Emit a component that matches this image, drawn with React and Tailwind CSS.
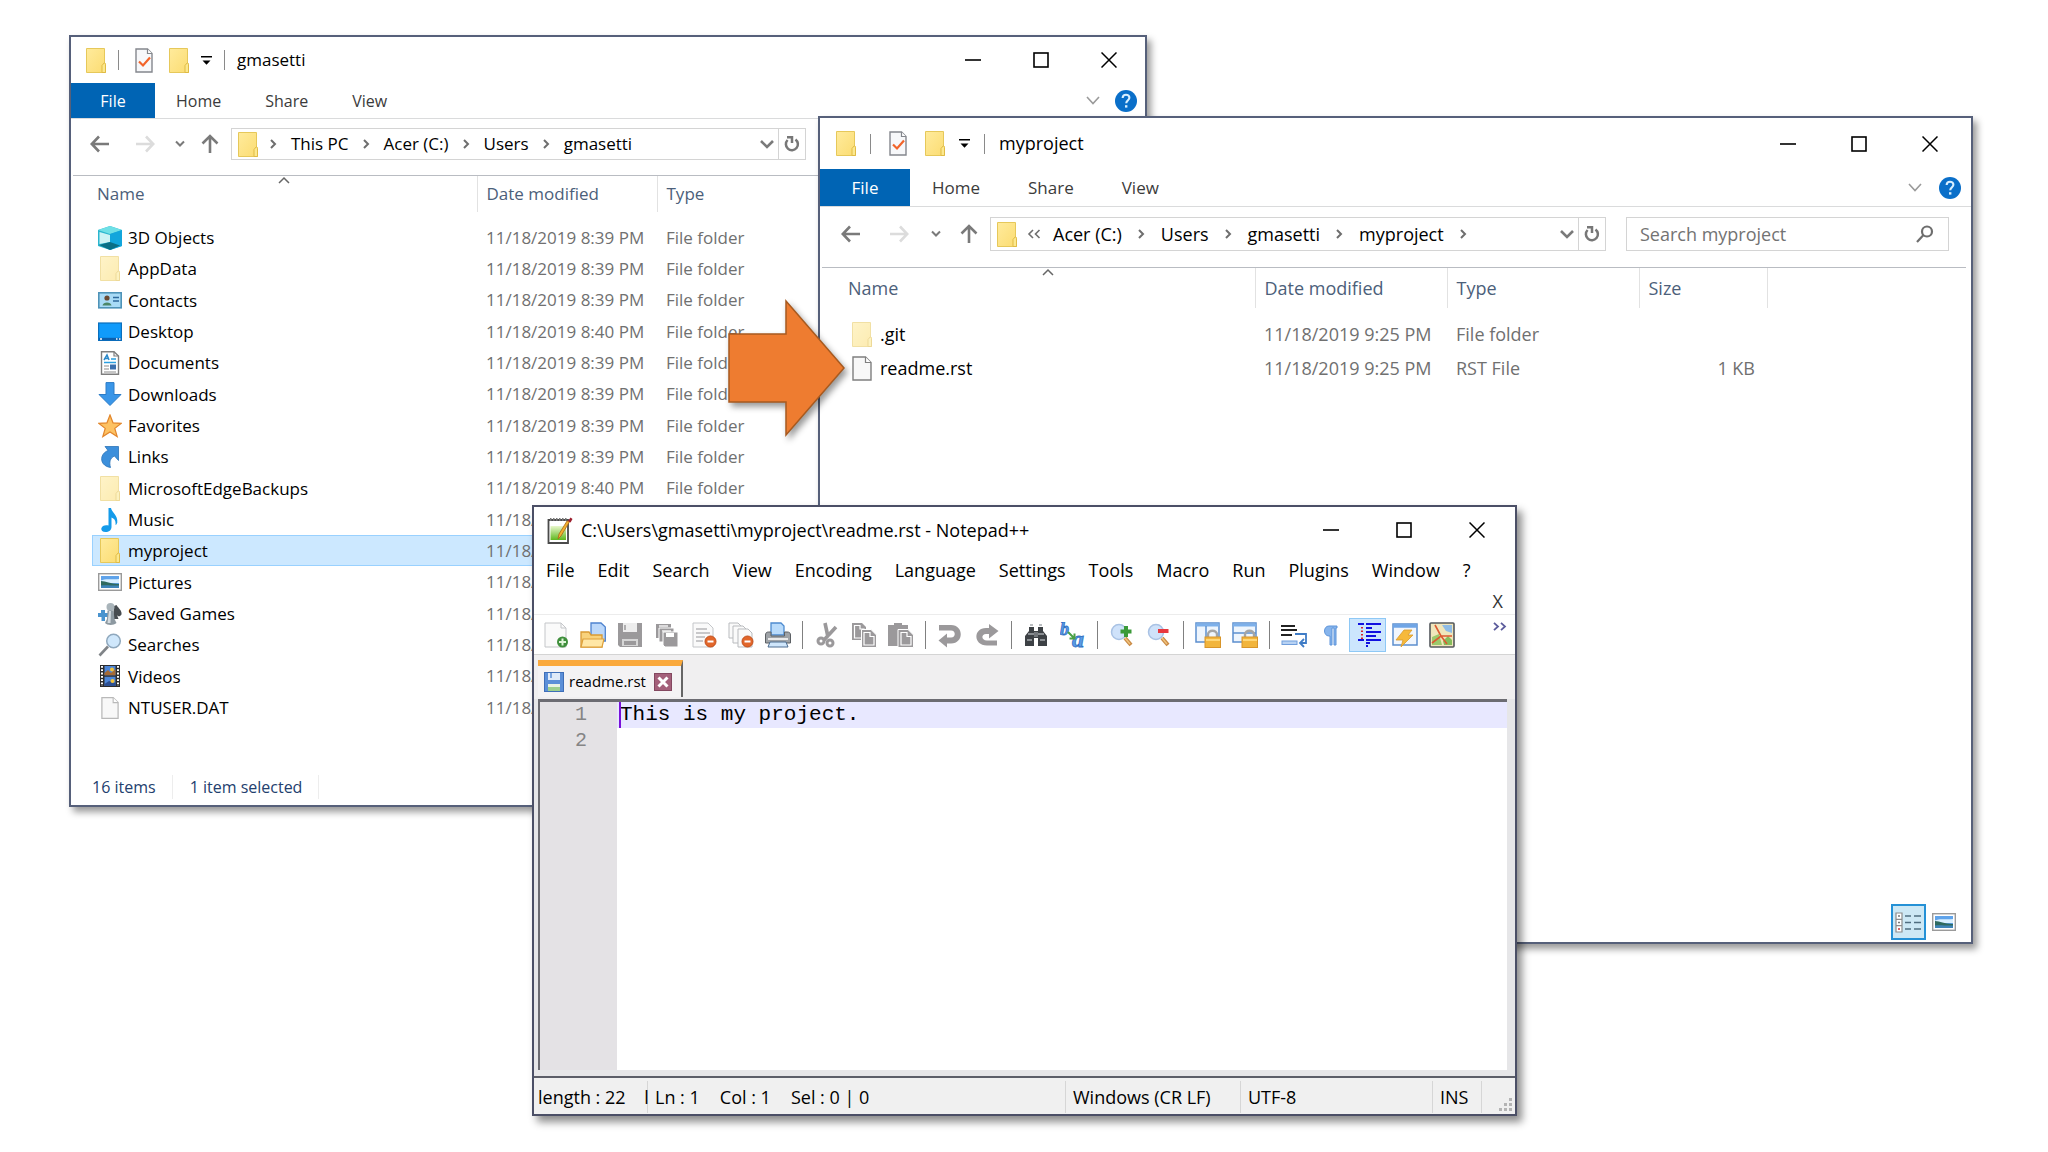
import React from "react";

/* ---------- small drawings ---------- */

function Folder({ className, pale, uid = "f" }) {
  return (
    <svg viewBox="0 0 20 25" className={className} aria-hidden="true" opacity={pale ? 0.55 : 1}>
      <defs>
        <linearGradient id={uid} x1="0" y1="0" x2="1" y2="1">
          <stop offset="0" stopColor="#ffeb9c" />
          <stop offset="1" stopColor="#fbdc72" />
        </linearGradient>
      </defs>
      <path d="M.5 .5H18.5V14.5L19.5 16.5V24.5H.5Z" fill={"url(#" + uid + ")"} stroke="#e6c85a" />
      <path d="M16 24.5V17.5L18.5 14.5L19.5 16.5V24.5Z" fill="#fce88e" stroke="#e0bb45" />
    </svg>
  );
}

function CheckDoc({ className }) {
  return (
    <svg viewBox="0 0 18 25" className={className} aria-hidden="true">
      <path d="M1 1H12.5L17 5.5V24H1Z" fill="#f7f8fa" stroke="#84878d" strokeWidth="1.4" />
      <path d="M12.5 1V5.5H17" fill="#fff" stroke="#84878d" strokeWidth="1.2" />
      <path d="M4 13.5L8 17.5L15 9.5" fill="none" stroke="#f2642a" strokeWidth="2.2" />
    </svg>
  );
}

function Page({ className, faint }) {
  const c = faint ? "#b9b9b9" : "#7f7f7f";
  return (
    <svg viewBox="0 0 20 25" className={className} aria-hidden="true">
      <path d="M1 1H13.5L19 6.5V24H1Z" fill="#f8f8f8" stroke={c} strokeWidth="1.4" />
      <path d="M13.5 1V6.5H19" fill="#fff" stroke={c} strokeWidth="1.2" />
    </svg>
  );
}

function Stroke({ box, d, className, width = 2 }) {
  return (
    <svg viewBox={box} className={className} fill="none" stroke="currentColor" strokeWidth={width} aria-hidden="true">
      <path d={d} />
    </svg>
  );
}

const Back = () => <Stroke box="0 0 20 18" d="M19 9H2M9 1.5L1.8 9L9 16.5" width={2.6} className="h-[18px] w-5 text-[#7a7a7a]" />;
const Forward = () => <Stroke box="0 0 20 18" d="M1 9H18M11 1.5L18.2 9L11 16.5" width={2.6} className="h-[18px] w-5 text-[#dcdcdc]" />;
const Up = () => <Stroke box="0 0 18 20" d="M9 19V2M1.5 9.5L9 2L16.5 9.5" width={2.6} className="h-5 w-[18px] text-[#7a7a7a]" />;
const SmallDown = () => <Stroke box="0 0 10 8" d="M1 1.5L5 5.5L9 1.5" className="h-2 w-[10px] text-[#7a7a7a]" />;
const Crumb = () => <Stroke box="0 0 7 10" d="M1 1L5 5L1 9" className="h-[10px] w-[7px] text-[#6e6e6e]" />;
const BoxDown = () => <Stroke box="0 0 14 10" d="M1 2L7 8L13 2" width={2.6} className="h-[10px] w-[14px] text-[#7a7a7a]" />;
const RibbonDown = () => <Stroke box="0 0 14 9" d="M1 1L7 7.5L13 1" width={1.6} className="h-[9px] w-[14px] text-[#9a9a9a]" />;

function Refresh() {
  return (
    <svg viewBox="0 0 16 18" className="h-[18px] w-4 text-[#777]" fill="none" stroke="currentColor" strokeWidth="2.5" aria-hidden="true">
      <path d="M3.6 5A6 6 0 1 0 11.5 4.4" />
      <path d="M3 2.2H8V8" />
    </svg>
  );
}

function Help() {
  return (
    <svg viewBox="0 0 22 22" className="size-[22px]" aria-hidden="true">
      <circle cx="11" cy="11" r="11" fill="#0a6fc9" />
      <path d="M7.6 8C7.8 5.8 9.2 4.8 11 4.8C13 4.8 14.4 6 14.4 7.8C14.4 10 11.4 10.4 11.2 13.2" fill="none" stroke="#d8efff" strokeWidth="2.1" />
      <rect x="10" y="15.2" width="2.4" height="2.4" fill="#d8efff" />
    </svg>
  );
}

function WindowButtons({ gap }) {
  return (
    <div className={"flex items-center text-black " + gap}>
      <button type="button" aria-label="Minimize" className="flex h-8 w-4 items-center justify-center">
        <svg viewBox="0 0 16 16" className="size-4"><path d="M0 8H16" stroke="currentColor" strokeWidth="1.6" /></svg>
      </button>
      <button type="button" aria-label="Maximize" className="flex h-8 w-4 items-center justify-center">
        <svg viewBox="0 0 16 16" className="size-4"><rect x="1" y="1" width="14" height="14" fill="none" stroke="currentColor" strokeWidth="1.6" /></svg>
      </button>
      <button type="button" aria-label="Close" className="flex h-8 w-4 items-center justify-center">
        <svg viewBox="0 0 16 16" className="size-4"><path d="M.5 .5L15.5 15.5M15.5 .5L.5 15.5" stroke="currentColor" strokeWidth="1.5" /></svg>
      </button>
    </div>
  );
}

/* ---------- file icons ---------- */

function Picture({ className }) {
  return (
    <svg viewBox="0 0 24 18" className={className} aria-hidden="true">
      <rect x=".7" y=".7" width="22.6" height="16.6" fill="#fff" stroke="#9a9a9a" strokeWidth="1.4" />
      <rect x="3" y="3" width="18" height="12" fill="#5fa3ea" />
      <path d="M3 7.500C8 5 14 7 21 6V10H3Z" fill="#d8efff" />
      <path d="M3 8C8 8 12 11 21 11V13H3Z" fill="#2f6a5f" />
      <path d="M3 12.5C9 11.5 14 13 21 12.5V15H3Z" fill="#3f84b8" />
    </svg>
  );
}

function FileIcon({ kind }) {
  const c = "size-6";
  switch (kind) {
    case "folder":
      return <Folder className="h-[25px] w-5" uid="row-f" />;
    case "pale":
      return <Folder className="h-[25px] w-5" pale uid="row-p" />;
    case "file":
      return <Page className="h-[25px] w-5" />;
    case "faintfile":
      return <Page className="h-6 w-[18px]" faint />;
    case "cube":
      return (
        <svg viewBox="0 0 24 24" className={c} aria-hidden="true">
          <path d="M0 4L12 0L24 4V20L12 24L0 20Z" fill="#2bb6cf" />
          <path d="M0 4L12 0L24 4L12 8Z" fill="#6fe0e6" />
          <path d="M12 8L24 4V20L12 24Z" fill="#12a6dc" />
          <path d="M1.5 6L12 9V16L1.5 18Z" fill="#cdf3f5" />
          <path d="M1 19L12 16L22 19.5L12 24Z" fill="#0a6f86" />
        </svg>
      );
    case "contacts":
      return (
        <svg viewBox="0 0 24 24" className={c} aria-hidden="true">
          <rect x=".8" y="4.8" width="22.4" height="15" fill="#a9dbf6" stroke="#4f93b8" strokeWidth="1.6" />
          <circle cx="9" cy="10" r="2.6" fill="#6b4a33" />
          <path d="M4.5 17.5C5 13.5 13 13.5 13.5 17.5Z" fill="#4d8768" />
          <path d="M15 9.5H21M15 13H21" stroke="#2f6a9c" strokeWidth="1.5" />
        </svg>
      );
    case "desktop":
      return (
        <svg viewBox="0 0 24 24" className={c} aria-hidden="true">
          <rect x=".6" y="3" width="22.8" height="17.4" fill="#109bfb" stroke="#0b6fbd" strokeWidth="1.2" />
          <rect x="1" y="17.8" width="22" height="2.4" fill="#0c5fae" />
          <path d="M2 19H4M18 19H19.5M21 19H22.5" stroke="#fff" strokeWidth="1.3" />
        </svg>
      );
    case "documents":
      return (
        <svg viewBox="0 0 24 24" className={c} aria-hidden="true">
          <path d="M3.5 .8H16L20.5 5V23.2H3.5Z" fill="#fff" stroke="#7e7e7e" strokeWidth="1.4" />
          <path d="M16 .8V5H20.5" fill="none" stroke="#7e7e7e" strokeWidth="1.2" />
          <path d="M6 9L9 4L11 9M7 7.5H11" stroke="#2a88c9" strokeWidth="1.5" fill="none" />
          <path d="M13 8H18M6 11.5H18" stroke="#2a9fe0" strokeWidth="1.6" />
          <path d="M6 15H11M6 18H11M6 21H18" stroke="#8c8c8c" strokeWidth="1.2" />
          <rect x="12" y="13.5" width="6" height="5" fill="#3a6fae" />
        </svg>
      );
    case "downloads":
      return (
        <svg viewBox="0 0 24 24" className={c} aria-hidden="true">
          <path d="M8 .6H16V12.5H23L12 23.5L1 12.5H8Z" fill="#3a96e8" stroke="#2c7cc7" />
        </svg>
      );
    case "star":
      return (
        <svg viewBox="0 0 24 24" className={c} aria-hidden="true">
          <path d="M12 1L15 8.8L23.3 9.3L16.8 14.4L19.2 22.6L12 17.9L4.8 22.6L7.2 14.4L.7 9.3L9 8.8Z" fill="#fdc263" stroke="#e2862c" strokeWidth="1.2" />
        </svg>
      );
    case "links":
      return (
        <svg viewBox="0 0 24 24" className={c} aria-hidden="true">
          <path d="M7 1.5H20.5V15.5L16.5 11C12 13 11 17 12.5 22.5C6 21.5 2.5 17 4 11.5C5 8.5 7.5 6.5 10 5.5Z" fill="#3c8fdb" stroke="#2b74b8" strokeWidth=".8" />
        </svg>
      );
    case "music":
      return (
        <svg viewBox="0 0 24 24" className={c} aria-hidden="true">
          <path d="M10.5 0H13C14 5 20 7 19.3 14.5C18.6 16.5 18 17 17.6 17C18 12 16 10.5 13.5 9.5V19C13.5 22 11 24 7.5 24C4.500 24 3 22.400 3.300 20.500C3.800 17.500 7.500 16.500 10.500 17.500Z" fill="#149bea" />
        </svg>
      );
    case "pictures":
      return <Picture className="h-[18px] w-6" />;
    case "games":
      return (
        <svg viewBox="0 0 24 24" className={c} aria-hidden="true">
          <path d="M18.500 3C21 7 24 8.500 23.500 12.500C22 15 20 14.500 19 13L20.500 17H15L16 4Z" fill="#474c50" />
          <path d="M0 11H3V8H7V11H11V15H7V19H3.500V15H0Z" fill="#4a94cf" />
          <circle cx="12.500" cy="5" r="4" fill="#a9b4ba" />
          <path d="M9.500 8.500H15.500L16.500 17L18.500 21C16 23.500 9 23.500 7 21L9 17Z" fill="#8d99a1" />
          <path d="M11 9H13L12.500 21H9.500Z" fill="#d3dbe0" />
        </svg>
      );
    case "searches":
      return (
        <svg viewBox="0 0 24 24" className={c} aria-hidden="true">
          <path d="M10 13.500L1.500 22.500" stroke="#808488" strokeWidth="2.600" />
          <circle cx="15.500" cy="8" r="6.800" fill="#cfe7fb" stroke="#8fa8bd" strokeWidth="1.500" />
        </svg>
      );
    case "videos":
      return (
        <svg viewBox="0 0 24 24" className={c} aria-hidden="true">
          <rect x="2" y="1" width="20" height="22" fill="#2c2c2c" />
          <rect x="6.500" y="2" width="11" height="9.300" fill="#4d86d8" />
          <rect x="6.500" y="12.700" width="11" height="9.300" fill="#4d86d8" />
          <path d="M6.500 9L10 6L13 9L17.500 5V11.300H6.500Z" fill="#a56a35" />
          <path d="M6.500 20L11 17L17.500 19V22H6.500Z" fill="#2c4f92" />
          <circle cx="14" cy="5.500" r="2" fill="#f3c33a" />
          <circle cx="14.500" cy="17" r="2" fill="#f3c33a" />
          <path d="M4 2V22M20 2V22" stroke="#fff" strokeWidth="2" strokeDasharray="1.800 1.500" />
        </svg>
      );
    default:
      return null;
  }
}

/* ---------- explorer windows ---------- */

const SIZES = {
  sm: {
    title: "h-[46px] text-[17px]",
    quick: "gap-3 pl-[15px]",
    props: "mx-1",
    tabs: "h-9 text-[16px]",
    file: "w-[84px]",
    tabGap: "gap-11 pl-[21px]",
    help: "gap-[15px] pr-2",
    winGap: "gap-[52px] pr-7",
    nav: "h-14 text-[17px] pl-[19px]",
    navGap: "gap-[25px]",
    recent: "ml-5",
    up: "ml-4",
    box: "h-8 ml-3",
    crumbs: "gap-[14px]",
    head: "h-[36px] text-[17px]",
    wrap: "pl-[21px]",
    nameHead: "pl-[5px]",
    cell: "pl-[6px]",
    cols: ["w-[385px]", "w-[180px]", "w-[180px]", "w-[120px]"],
    row: "h-[31px] nth-[3n]:h-8",
    name: "text-[17px]",
    pad: "h-[10px]",
  },
  lg: {
    title: "h-[51px] text-[18px]",
    quick: "gap-[14px] pl-4",
    props: "mx-1",
    tabs: "h-[38px] text-[17px]",
    file: "w-[90px]",
    tabGap: "gap-12 pl-[22px]",
    help: "gap-[17px] pr-2.5",
    winGap: "gap-[55px] pr-[33px]",
    nav: "h-[60px] text-[18px] pl-[21px]",
    navGap: "gap-[28px]",
    recent: "ml-[22px]",
    up: "ml-[19px]",
    box: "h-[34px] ml-3",
    crumbs: "gap-4",
    head: "h-[40px] text-[18px]",
    wrap: "pl-[21px]",
    nameHead: "pl-[7px]",
    cell: "pl-[9px]",
    cols: ["w-[414px]", "w-[192px]", "w-[192px]", "w-[128px]"],
    row: "h-[34px]",
    name: "text-[18px]",
    pad: "h-[9px]",
  },
};

function Explorer({ size, place, title, crumbs, collapsed, navEnd, columns, rows, footer }) {
  const s = SIZES[size];
  return (
    <section aria-label={title} className={"absolute flex flex-col border-2 border-[#56607a] bg-white shadow-[4px_5px_7px_rgba(0,0,0,0.4)] " + place}>
      <header className={"flex shrink-0 items-center " + s.title}>
        <div className={"flex flex-1 items-center " + s.quick}>
          <Folder className="h-[25px] w-5" uid={size + "t1"} />
          <span className="h-5 w-px bg-[#8a8a8a]" />
          <button type="button" aria-label="Properties" className={s.props}><CheckDoc className="h-[25px] w-[18px]" /></button>
          <button type="button" aria-label="New folder"><Folder className="h-[25px] w-5" uid={size + "t2"} /></button>
          <button type="button" aria-label="Customize">
            <svg viewBox="0 0 11 11" className="size-[11px]"><path d="M0 1H11V2.500H0ZM1.500 5.500H9.500L5.500 9.800Z" fill="#000" /></svg>
          </button>
          <span className="h-5 w-px bg-[#8a8a8a]" />
          <h1 className="font-normal">{title}</h1>
        </div>
        <WindowButtons gap={s.winGap} />
      </header>

      <nav className={"flex shrink-0 items-stretch border-b border-[#dadbdc] " + s.tabs}>
        <button type="button" className={"bg-[#0064b4] text-white " + s.file}>File</button>
        <div className={"flex flex-1 items-center text-[#3b3b3b] " + s.tabGap}>
          <button type="button">Home</button>
          <button type="button">Share</button>
          <button type="button">View</button>
        </div>
        <div className={"flex items-center " + s.help}>
          <button type="button" aria-label="Expand the ribbon"><RibbonDown /></button>
          <button type="button" aria-label="Help"><Help /></button>
        </div>
      </nav>

      <div className={"flex shrink-0 items-center pb-1.5 " + s.nav}>
        <div className={"flex items-center " + s.navGap}>
          <button type="button" aria-label="Back"><Back /></button>
          <button type="button" aria-label="Forward"><Forward /></button>
        </div>
        <button type="button" aria-label="Recent locations" className={s.recent}><SmallDown /></button>
        <button type="button" aria-label="Up" className={s.up}><Up /></button>
        <div className={"flex flex-1 items-center border border-[#d4d4d4] " + s.box}>
          <div className="flex flex-1 items-center pl-1.5">
            <Folder className="h-[25px] w-5" uid={size + "n"} />
            <div className={"ml-3 flex items-center whitespace-nowrap " + s.crumbs}>
              {collapsed ? (
                <Stroke box="0 0 14 10" d="M6 1L2 5L6 9M12.500 1L8.500 5L12.500 9" width={1.600} className="-ml-0.5 h-[10px] w-[14px] text-[#6e6e6e]" />
              ) : (
                <Crumb />
              )}
              {crumbs.map((c, i) => (
                <React.Fragment key={c}>
                  <button type="button" className={i === 0 && collapsed ? "-ml-1" : ""}>{c}</button>
                  {(i < crumbs.length - 1 || collapsed) && <Crumb />}
                </React.Fragment>
              ))}
            </div>
          </div>
          <button type="button" aria-label="Previous locations" className="pr-1"><BoxDown /></button>
          <button type="button" aria-label="Refresh" className="flex h-full w-[27px] items-center justify-center border-l border-[#d4d4d4]"><Refresh /></button>
        </div>
        {navEnd}
      </div>

      <div className={"mr-[5px] ml-0.5 border-t border-[#b9bcc2] " + s.wrap}>
        <table className="-ml-0.5 w-full table-fixed border-collapse text-left">
          <thead>
            <tr className={"text-[#4c607a] " + s.head}>
              {columns.map((c, i) => (
                <th key={c} scope="col" className={"relative border-r border-[#e2e2e2] p-0 font-normal " + s.cols[i] + " " + (i === 0 ? s.nameHead : "pl-[9px]")}>
                  {i === 0 && (
                    <Stroke box="0 0 12 8" d="M1 7L6 2L11 7" width={1.500} className="absolute top-0 left-1/2 h-2 w-3 -translate-x-1/2 text-[#666]" />
                  )}
                  <button type="button">{c}</button>
                </th>
              ))}
              <th aria-hidden="true" className="p-0" />
            </tr>
          </thead>
          <tbody><tr className={s.pad}><td colSpan={columns.length + 1} className="p-0" /></tr></tbody>
          <tbody>
            {rows.map((r) => (
              <tr key={r.name} className={s.row + (r.selected ? " bg-[#cce8ff] outline-1 -outline-offset-1 outline-[#99d1ff]" : "")}>
                <td className={"p-0 " + s.cell}>
                  <span className={"flex items-center gap-1.5 leading-[25px] " + s.name}>
                    <span className="flex w-6 justify-center"><FileIcon kind={r.icon} /></span>
                    {r.name}
                  </span>
                </td>
                <td className={"p-0 pl-[9px] leading-6 whitespace-nowrap text-[#707070] " + s.name}>{r.date}</td>
                <td className={"p-0 pl-[9px] leading-6 whitespace-nowrap text-[#707070] " + s.name}>{r.type}</td>
                {columns.length > 3 && (
                  <td className={"p-0 pr-3 text-right leading-6 text-[#707070] " + s.name}>{r.size}</td>
                )}
                <td className="p-0" />
              </tr>
            ))}
          </tbody>
        </table>
      </div>
      {footer}
    </section>
  );
}

const HOME_ROWS = [
  ["3D Objects", "cube", "8:39"],
  ["AppData", "pale", "8:39"],
  ["Contacts", "contacts", "8:39"],
  ["Desktop", "desktop", "8:40"],
  ["Documents", "documents", "8:39"],
  ["Downloads", "downloads", "8:39"],
  ["Favorites", "star", "8:39"],
  ["Links", "links", "8:39"],
  ["MicrosoftEdgeBackups", "pale", "8:40"],
  ["Music", "music", "8:39"],
  ["myproject", "folder", "9:25"],
  ["Pictures", "pictures", "8:40"],
  ["Saved Games", "games", "8:39"],
  ["Searches", "searches", "8:40"],
  ["Videos", "videos", "8:39"],
  ["NTUSER.DAT", "faintfile", "8:39"],
].map(([name, icon, t]) => ({
  name,
  icon,
  date: "11/18/2019 " + t + " PM",
  type: name === "NTUSER.DAT" ? "DAT File" : "File folder",
  selected: name === "myproject",
}));

const PROJECT_ROWS = [
  { name: ".git", icon: "pale", date: "11/18/2019 9:25 PM", type: "File folder", size: "" },
  { name: "readme.rst", icon: "file", date: "11/18/2019 9:25 PM", type: "RST File", size: "1 KB" },
];

/* ---------- editor toolbar icons, on a 26 by 26 grid ---------- */

const G = "#9b999b";

function Lens({ children }) {
  return (
    <>
      <path d="M16 16L22 23" stroke="#c98a45" strokeWidth="4" />
      <path d="M16 16L21 22" stroke="#f0c27c" strokeWidth="1.500" />
      <circle cx="10" cy="10" r="7.500" fill="#cfe2fa" stroke="#a9c2e4" strokeWidth="1.500" />
      {children}
    </>
  );
}

function Lock() {
  return (
    <>
      <path d="M13 16V12.500C13 7.500 22 7.500 22 12.500V16" fill="none" stroke="#a5a5a5" strokeWidth="2.400" />
      <rect x="10" y="15" width="15.500" height="10.500" fill="#f2b53c" stroke="#d8952a" />
      <path d="M11 18H25" stroke="#ffd777" strokeWidth="2" />
    </>
  );
}

function Minus() {
  return (
    <>
      <circle cx="19.500" cy="19.500" r="5.500" fill="#e2662a" stroke="#c24f1a" />
      <path d="M16.500 19.500H22.500" stroke="#fff" strokeWidth="2" />
    </>
  );
}

const TOOL_ICONS = {
  New: (
    <>
      <path d="M2 1H18L23 6V25H2Z" fill="#fafafa" stroke="#c4c6c9" />
      <path d="M18 1V6H23" fill="none" stroke="#c4c6c9" />
      <circle cx="19.500" cy="20" r="5.500" fill="#3f8f3c" />
      <path d="M19.500 16.500V23.500M16 20H23" stroke="#dff5d8" strokeWidth="2" />
    </>
  ),
  Open: (
    <>
      <path d="M11 1H21L25.300 5V19H11Z" fill="#bcd8fa" stroke="#4e83cf" strokeWidth="1.300" />
      <path d="M1 10H9L11 13H22V25H1Z" fill="#f8d27c" stroke="#d99a33" strokeWidth="1.300" />
      <path d="M1 25L3 17H24L22 25Z" fill="#ffe7a6" stroke="#dda03b" strokeWidth="1.200" />
    </>
  ),
  Save: (
    <>
      <path d="M1 1H25V25H3L1 23Z" fill={G} />
      <rect x="6" y="1" width="14" height="9" fill="#ededed" />
      <path d="M8 3V8M3 14H23" stroke={G} strokeWidth="1.500" />
      <rect x="5" y="17" width="16" height="7" fill="#d6d6d6" />
      <rect x="7" y="19" width="12" height="4" fill={G} />
    </>
  ),
  "Save all": (
    <>
      <path d="M2 2H17V16H2Z" fill={G} /><path d="M5 4H14" stroke="#fff" strokeWidth="1.300" />
      <path d="M5 6H20V20H5Z" fill={G} stroke="#fff" /><path d="M8 9H17" stroke="#fff" strokeWidth="1.300" />
      <path d="M9 10H24V25H11L9 23Z" fill={G} stroke="#fff" /><rect x="12" y="11" width="8" height="4" fill="#fff" />
    </>
  ),
  Close: (
    <>
      <path d="M2 1H17L22 6V25H2Z" fill="#fafafa" stroke="#c4c6c9" />
      <path d="M5 7H16M5 11H19M5 15H14M5 19H12" stroke="#b8b8bb" strokeWidth="1.300" />
      <Minus />
    </>
  ),
  "Close all": (
    <>
      <path d="M1 1H10L13 4V16H1Z" fill="#fafafa" stroke="#b9bbbe" />
      <path d="M5 4H15L18 7V21H5Z" fill="#fafafa" stroke="#b9bbbe" />
      <path d="M10 7H20L24 11V25H10Z" fill="#fafafa" stroke="#b9bbbe" />
      <Minus />
    </>
  ),
  Print: (
    <>
      <path d="M6 1H16L19 4V13H6Z" fill="#b9dbfb" stroke="#4d8bd0" strokeWidth="1.300" />
      <path d="M.5 13C.5 11 1.500 10 3.500 10H6V14H19.500V10H22C24.500 10 25.500 11 25.500 13V21H.5Z" fill="#9fa3a7" stroke="#5c6064" />
      <path d="M3 17H23" stroke="#eaeaea" strokeWidth="2" />
      <path d="M5 20H21L23 25H3Z" fill="#cfe6fb" stroke="#4c6c90" />
    </>
  ),
  Cut: (
    <>
      <path d="M11 1L14 15M22 5L10 18" stroke={G} strokeWidth="3.600" />
      <circle cx="7" cy="19" r="3" fill="none" stroke={G} strokeWidth="3" />
      <circle cx="16" cy="21" r="3" fill="none" stroke={G} strokeWidth="3" />
    </>
  ),
  Copy: (
    <>
      <path d="M1 1H11L15 5V18H1Z" fill={G} /><path d="M3.500 3.500H9V7H13V16H3.500Z" fill="none" stroke="#fff" strokeWidth="1.200" />
      <path d="M10.500 7.500H20L25.500 13V25.500H10.500Z" fill={G} stroke="#fff" /><path d="M13 10.500H19V14.500H23V23H13Z" fill="none" stroke="#fff" strokeWidth="1.200" />
    </>
  ),
  Paste: (
    <>
      <path d="M0 3H6V1H14V3H20V24H0Z" fill={G} />
      <path d="M10 7.500H20L25.500 13V25.500H10Z" fill={G} stroke="#fff" /><path d="M13 10.500H19V14.500H23V23H13Z" fill="none" stroke="#fff" strokeWidth="1.200" />
    </>
  ),
  Undo: <path d="M2 3V8.500H14C19 8.500 19 15.500 14 15.500H10V11.500L1.500 18.500L10 25.500V21.500H14C27 21.500 27 3 14 3Z" fill={G} />,
  Redo: <path d="M23 18.500V23.500H13C-1 23.500 -1 6 12 6H15V2L24.500 9L15 16.500V12H12C7 12 7 18.500 13 18.500Z" fill={G} />,
  Find: (
    <>
      <path d="M6 5H11V9H15V5H20V9L24 14V24H15V16H11V24H2V14L6 9Z" fill="#3d4145" />
      <path d="M7 3H10M16 3H19M5 12H11M15 12H21M4 18H9M17 18H22" stroke="#a5a9ad" strokeWidth="1.500" />
      <rect x="11" y="10" width="4" height="5" fill="#74787c" />
    </>
  ),
  Replace: (
    <>
      <g fill="#5a9be6" stroke="#2f6fc2" strokeWidth=".8" fontFamily="Liberation Serif, serif" fontStyle="italic" fontWeight="bold">
        <text x="0" y="13" fontSize="18">b</text>
        <text x="12" y="25" fontSize="24">a</text>
      </g>
      <path d="M8 10L14 16M14.500 11.500V16.500H9.500" stroke="#4aa045" strokeWidth="2" fill="none" />
    </>
  ),
  "Zoom in": <Lens><path d="M17 4V15M11.500 9.500H22.500" stroke="#3b9a38" strokeWidth="4" /></Lens>,
  "Zoom out": <Lens><path d="M12 9H22.500" stroke="#e8383f" strokeWidth="4" /></Lens>,
  "Synchronize vertical": (
    <>
      <path d="M1 1H24V20H1Z" fill="#eef5fd" stroke="#5c8fce" strokeWidth="1.500" />
      <path d="M1 3H24" stroke="#7db0ea" strokeWidth="3" /><path d="M11 4V20" stroke="#5c8fce" strokeWidth="1.500" />
      <Lock />
    </>
  ),
  "Synchronize horizontal": (
    <>
      <path d="M1 1H24V20H1Z" fill="#eef5fd" stroke="#5c8fce" strokeWidth="1.500" />
      <path d="M1 3H24" stroke="#7db0ea" strokeWidth="3" /><path d="M1 11H24" stroke="#5c8fce" strokeWidth="1.500" />
      <Lock />
    </>
  ),
  "Word wrap": (
    <>
      <path d="M0 4H14M0 8H16M0 13H11" stroke="#222" strokeWidth="1.800" />
      <path d="M14 12H25V21H20M23 17L19 21L23 25" fill="none" stroke="#3f7cc6" strokeWidth="1.800" />
      <rect x="1" y="19" width="15" height="3.500" fill="#b8d2f3" stroke="#6f9ddb" />
    </>
  ),
  "Show all characters": (
    <path d="M19 4H11C5 4 5 14 11 14H12V23H14V6H16V23H18V6H19Z" fill="#86b4ec" stroke="#5f95da" />
  ),
  "Indent guide": (
    <>
      <path d="M3 2H9M11 2H26M11 6H17M11 10H26M11 14H21M3 18H9M11 18H26M11 21H15M11 24H13" stroke="#1111e0" strokeWidth="2" />
      <path d="M7 5V17" stroke="#d3262c" strokeWidth="2" strokeDasharray="1.500 2" />
    </>
  ),
  "User language": (
    <>
      <path d="M1 2H25V23H1Z" fill="#f1f6fd" stroke="#5c8fce" strokeWidth="1.500" />
      <path d="M1 4H25" stroke="#6fa5e6" strokeWidth="3.500" />
      <path d="M12 8H20L16 13H21L9 25L11 18H4Z" fill="#f6b93b" stroke="#d99a2c" strokeWidth=".8" />
    </>
  ),
  "Document map": (
    <>
      <rect x="1" y="1" width="24" height="24" rx="1" fill="#f0e6bb" stroke="#54585c" strokeWidth="1.600" />
      <path d="M13 3H23V11L17 9Z" fill="#8fbce6" /><path d="M3 15L10 12L13 23H3Z" fill="#9cc96b" /><path d="M14 19L19 14L23 18V23H15Z" fill="#86bd5c" />
      <path d="M6 3L12 14L18 22M3 21L12 14L23 14" fill="none" stroke="#dc5a30" strokeWidth="1.600" />
    </>
  ),
};

const TOOL_GROUPS = [
  ["New", "Open", "Save", "Save all", "Close", "Close all", "Print"],
  ["Cut", "Copy", "Paste"],
  ["Undo", "Redo"],
  ["Find", "Replace"],
  ["Zoom in", "Zoom out"],
  ["Synchronize vertical", "Synchronize horizontal"],
  ["Word wrap", "Show all characters", "Indent guide", "User language", "Document map"],
];

const MENUS = ["File", "Edit", "Search", "View", "Encoding", "Language", "Settings", "Tools", "Macro", "Run", "Plugins", "Window", "?"];

function Notepad() {
  return (
    <section aria-label="Notepad++" className="absolute top-[505px] right-[531px] bottom-[36px] left-[532px] flex flex-col border-2 border-[#4b4f66] bg-white text-[18px] shadow-[5px_6px_8px_rgba(0,0,0,0.45)]">
      <header className="flex h-[46px] shrink-0 items-center pr-[30px] pl-[13px]">
        <svg viewBox="0 0 26 27" className="h-[27px] w-[26px]" aria-hidden="true">
          <defs>
            <linearGradient id="pad" x1="0" y1="0" x2="0" y2="1">
              <stop offset="0" stopColor="#e9f8cc" /><stop offset="1" stopColor="#5fb81e" />
            </linearGradient>
          </defs>
          <path d="M1.500 3H21V26H1.500Z" fill="#fff" stroke="#4a4a4a" strokeWidth="1.800" />
          <rect x="3.500" y="9" width="15.500" height="14" fill="url(#pad)" />
          <path d="M3 2.500H20" stroke="#777" strokeWidth="3" strokeDasharray="1.500 1.500" />
          <path d="M23 4L14 19L11 22L12 17L20 4Z" fill="#f2b02e" stroke="#a8661c" strokeWidth=".8" />
          <path d="M21 4L23.500 .5L25.500 2L23.500 5.500Z" fill="#9c1f2e" />
        </svg>
        <h1 className="ml-2 flex-1 font-normal">C:\Users\gmasetti\myproject\readme.rst - Notepad++</h1>
        <WindowButtons gap="gap-[57px]" />
      </header>

      <nav className="flex h-[35px] shrink-0 items-center gap-[23px] pl-3">
        {MENUS.map((m) => <button key={m} type="button">{m}</button>)}
      </nav>
      <div className="flex h-[27px] shrink-0 items-center justify-end border-b border-[#ececec] pr-3">
        <button type="button" className="text-[#333]">X</button>
      </div>

      <div className="flex h-10 shrink-0 items-center border-b border-[#d4d4d4] pl-[3px]">
        {TOOL_GROUPS.map((group, g) => (
          <React.Fragment key={g}>
            {g > 0 && (
              <span className="flex w-3 justify-center"><span className="h-7 w-px bg-[#808080]" /></span>
            )}
            {group.map((name) => (
              <button
                key={name}
                type="button"
                aria-label={name}
                className={"flex h-[34px] w-[37px] items-center justify-center " + (name === "Indent guide" ? "border border-[#8ec8f5] bg-[#cce6fd]" : "")}
              >
                <svg viewBox="0 0 26 26" className="size-[26px]" fill="none">{TOOL_ICONS[name]}</svg>
              </button>
            ))}
          </React.Fragment>
        ))}
        <button type="button" aria-label="More tools" className="mr-2 mb-4 ml-auto text-[#5c5c9c]">
          <Stroke box="0 0 14 9" d="M1 .8L5 4.500L1 8.200M8 .8L12 4.500L8 8.200" width={1.800} className="h-[9px] w-[14px]" />
        </button>
      </div>

      <div className="flex h-[44px] shrink-0 items-start bg-[#f0eff0] pt-[5px] pl-1">
        <div className="flex h-[37px] items-center border-t-6 border-r-2 border-t-[#faa93c] border-r-[#666] bg-[#f4f3f4] pr-[9px] pl-1.5">
          <svg viewBox="0 0 20 20" className="size-5" aria-hidden="true">
            <rect x=".5" y=".5" width="19" height="19" fill="#5b8fd8" stroke="#3f6fb8" />
            <rect x="4" y="1" width="12" height="7" fill="#dfeaf8" /><path d="M7 1V6" stroke="#5b8fd8" strokeWidth="1.500" />
            <rect x="4" y="12" width="12" height="7" fill="#e8f2e4" /><rect x="4" y="15" width="12" height="4" fill="#9ccf8e" />
          </svg>
          <button type="button" className="ml-[5px] text-[15px]">readme.rst</button>
          <button type="button" aria-label="Close tab" className="ml-2">
            <svg viewBox="0 0 18 18" className="size-[18px]"><rect x=".5" y=".5" width="17" height="17" fill="#a4607a" stroke="#844860" /><path d="M4.500 4.500L13.500 13.500M13.500 4.500L4.500 13.500" stroke="#fff" strokeWidth="3" /></svg>
          </button>
        </div>
      </div>

      <div className="flex min-h-0 flex-1 border-r-8 border-b-6 border-l-4 border-[#e6e6e8] bg-white">
        <div className="flex min-h-0 flex-1 border-t-3 border-l-2 border-[#6c6c72]">
          <div aria-hidden="true" className="w-[77px] bg-[#e4e2e5] pr-[30px] text-right font-['Liberation_Mono','Courier_New',monospace] text-[20px] leading-[26px] text-[#858585]">
            <div>1</div>
            <div>2</div>
          </div>
          <div className="relative flex flex-1">
            <span aria-hidden="true" className="absolute top-0 left-0.5 h-[26px] w-0.5 bg-[#7a10d8]" />
            <textarea
              aria-label="readme.rst"
              spellCheck={false}
              defaultValue={"This is my project.\n"}
              className="flex-1 resize-none overflow-hidden bg-[linear-gradient(#e8e8ff_26px,white_26px)] p-0 pl-[3px] font-['Liberation_Mono','Courier_New',monospace] text-[21px] leading-[26px] text-black outline-none"
            />
          </div>
        </div>
      </div>

      <footer className="flex h-[38px] shrink-0 items-center border-t-2 border-[#5c5e68] bg-[#f0f0f0] pt-0.5 whitespace-pre">
        <span className="w-[114px] border-r border-[#d6d6d6] pl-1 leading-8">length : 22    l</span>
        <span className="flex flex-1 gap-5 border-r border-[#d6d6d6] pl-[7px] leading-8">
          <span>Ln : 1</span>
          <span>Col : 1</span>
          <span>Sel : 0 | 0</span>
        </span>
        <span className="w-[175px] border-r border-[#d6d6d6] pl-[7px] leading-8">Windows (CR LF)</span>
        <span className="w-[192px] border-r border-[#d6d6d6] pl-[7px] leading-8">UTF-8</span>
        <span className="w-[49px] border-r border-[#d6d6d6] pl-[7px] leading-8">INS</span>
        <span className="flex h-full w-[33px] items-end justify-end p-0.5">
          <svg viewBox="0 0 14 14" className="size-[14px]" fill="#b4b4b4" aria-hidden="true">
            <path d="M10 0H13V3H10ZM10 5H13V8H10ZM5 5H8V8H5ZM10 10H13V13H10ZM5 10H8V13H5ZM0 10H3V13H0Z" />
          </svg>
        </span>
      </footer>
    </section>
  );
}

export default function App() {
  return (
    <main className="relative h-screen min-h-[1000px] overflow-hidden bg-white font-['Open_Sans','Noto_Sans',sans-serif] text-black">
      <Explorer
        size="sm"
        place="left-[69px] right-[901px] top-[35px] bottom-[345px]"
        title="gmasetti"
        crumbs={["This PC", "Acer (C:)", "Users", "gmasetti"]}
        columns={["Name", "Date modified", "Type"]}
        rows={HOME_ROWS}
        navEnd={<div className="w-[339px] shrink-0" />}
        footer={
          <footer className="mt-auto flex h-9 items-center pl-[21px] text-[16px] text-[#23406e]">
            <span className="border-r border-[#ededed] pr-4">16 items</span>
            <span className="border-r border-[#ededed] pr-4 pl-[17px]">1 item selected</span>
          </footer>
        }
      />

      <Explorer
        size="lg"
        place="left-[818px] right-[75px] top-[116px] bottom-[208px]"
        title="myproject"
        crumbs={["Acer (C:)", "Users", "gmasetti", "myproject"]}
        collapsed
        columns={["Name", "Date modified", "Type", "Size"]}
        rows={PROJECT_ROWS}
        navEnd={
          <label className="mr-[22px] ml-5 flex h-[34px] w-[323px] items-center border border-[#d4d4d4] pr-[14px] pl-[13px]">
            <input type="text" aria-label="Search myproject" placeholder="Search myproject" className="min-w-0 flex-1 outline-none placeholder:text-[#737373]" />
            <svg viewBox="0 0 18 18" className="size-[18px] text-[#6e6e6e]" fill="none" stroke="currentColor" strokeWidth="2.200" aria-hidden="true">
              <circle cx="11" cy="6.500" r="5" />
              <path d="M7.500 10L1 17" />
            </svg>
          </label>
        }
        footer={
          <footer className="mt-auto flex items-center justify-end gap-[6px] pr-[15px] pb-0.5">
            <button type="button" aria-label="Details view" className="flex h-9 w-[35px] items-center justify-center border-2 border-[#2591d6] bg-[#cde8f5]">
              <svg viewBox="0 0 27 21" className="h-[21px] w-[27px]" aria-hidden="true">
                <path d="M1 1H7V20H1ZM1 7.300H7M1 13.600H7" fill="#fff" stroke="#8c8c8c" strokeWidth="1.200" />
                <path d="M3 4H5M3 10.500H5" stroke="#777" strokeWidth="1.500" /><path d="M3 17H5" stroke="#c33" strokeWidth="1.500" />
                <path d="M10 4H16M19 4H26M10 10.500H16M19 10.500H26M10 17H16M19 17H26" stroke="#4f6d80" strokeWidth="1.500" />
              </svg>
            </button>
            <button type="button" aria-label="Thumbnail view"><Picture className="h-[18px] w-6" /></button>
          </footer>
        }
      />

      <Notepad />

      <svg viewBox="0 0 130 150" className="absolute top-[295px] left-[724px] h-[150px] w-[130px] drop-shadow-[3px_4px_3px_rgba(0,0,0,0.4)]" aria-hidden="true">
        <path d="M5 39H62V6L120 73L62 140V107H5Z" fill="#ee7c30" stroke="#a85a1f" strokeWidth="1.500" />
      </svg>
    </main>
  );
}
